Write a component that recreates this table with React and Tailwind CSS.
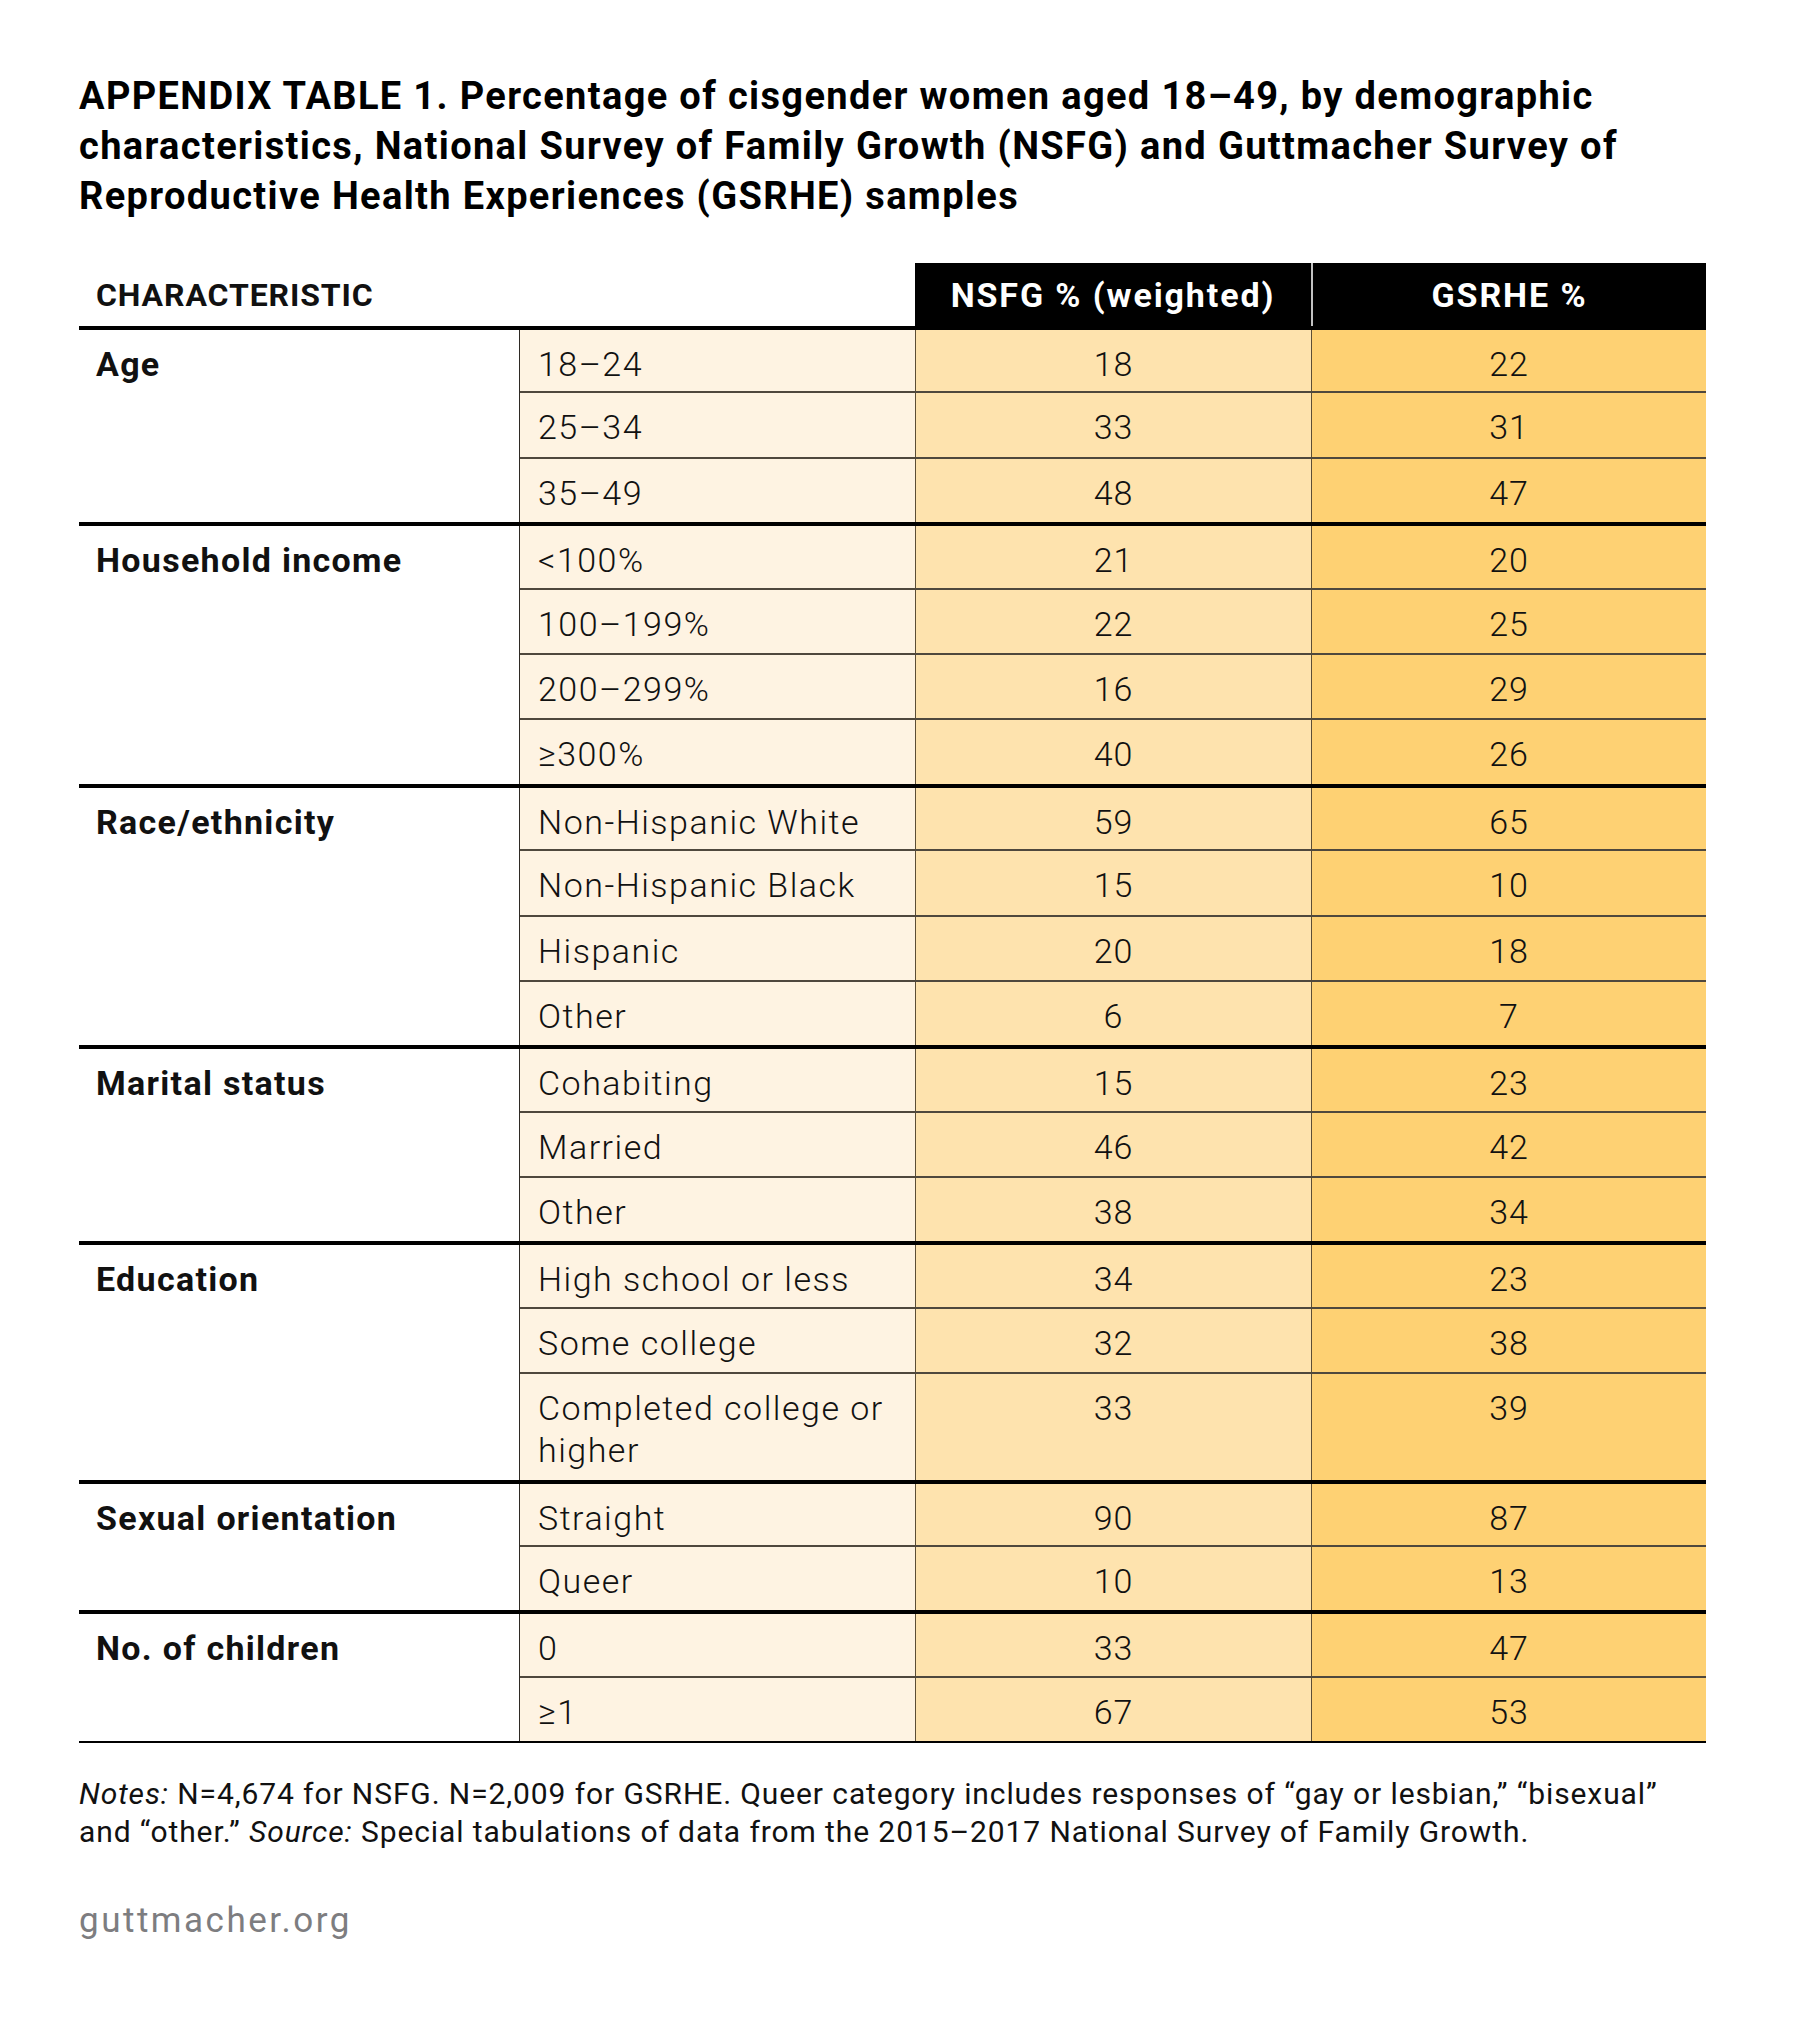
const GROUPS = [
	{
		label: "Age",
		rows: [
			["18–24", "18", "22"],
			["25–34", "33", "31"],
			["35–49", "48", "47"],
		],
	},
	{
		label: "Household income",
		rows: [
			["<100%", "21", "20"],
			["100–199%", "22", "25"],
			["200–299%", "16", "29"],
			["≥300%", "40", "26"],
		],
	},
	{
		label: "Race/ethnicity",
		rows: [
			["Non-Hispanic White", "59", "65"],
			["Non-Hispanic Black", "15", "10"],
			["Hispanic", "20", "18"],
			["Other", "6", "7"],
		],
	},
	{
		label: "Marital status",
		rows: [
			["Cohabiting", "15", "23"],
			["Married", "46", "42"],
			["Other", "38", "34"],
		],
	},
	{
		label: "Education",
		rows: [
			["High school or less", "34", "23"],
			["Some college", "32", "38"],
			[["Completed college or", "higher"], "33", "39"],
		],
	},
	{
		label: "Sexual orientation",
		rows: [
			["Straight", "90", "87"],
			["Queer", "10", "13"],
		],
	},
	{
		label: "No. of children",
		rows: [
			["0", "33", "47"],
			["≥1", "67", "53"],
		],
	},
];

const Row = ({ row, first }) => {
	const [name, nsfg, gsrhe] = row;
	const tall = Array.isArray(name);
	let h = "h-[65.4px] border-t-2 border-[#4f483d]";
	if (first) h = "h-[61.4px]";
	if (tall) h = "h-[107.3px] border-t-2 border-[#4f483d]";

	return (
		<div className={`flex ${h}`}>
			<div className="w-[395px] bg-[#fef3e2] pl-[18px] pt-[13px] tracking-[1.5px]">
				{tall ? (
					<>
						{name[0]}
						<br />
						{name[1]}
					</>
				) : (
					name
				)}
			</div>
			<div className="w-[396px] bg-[#fee3ae] border-l-[1.5px] border-[#5c4e35] text-center pt-[13px] tracking-[1px]">{nsfg}</div>
			<div className="w-[395px] bg-[#fed173] border-l-[1.5px] border-[#5c4e35] text-center pt-[13px] tracking-[1px]">{gsrhe}</div>
		</div>
	);
};

const App = () => {
	return (
		<div className="w-[1800px] h-[2024px] bg-white pl-[79px] pt-[71px] font-['Roboto',sans-serif] text-[#111]">
			<h1 className="text-[38px] leading-[50px] font-bold text-black tracking-[1.35px]">
				APPENDIX TABLE 1. Percentage of cisgender women aged 18–49, by demographic
				<br />
				characteristics, National Survey of Family Growth (NSFG) and Guttmacher Survey of
				<br />
				Reproductive Health Experiences (GSRHE) samples
			</h1>

			<div className="mt-[42px] w-[1627px] text-[34px] leading-[42px]">
				<div className="flex h-[63px] font-bold">
					<div className="w-[836px] pl-[17px] pt-[11px] text-[32px] tracking-[0.9px]">CHARACTERISTIC</div>
					<div className="w-[396px] bg-black text-white text-center pt-[11px] tracking-[1.9px]">NSFG % (weighted)</div>
					<div className="w-[395px] bg-black text-white text-center pt-[11px] tracking-[1.9px] border-l-2 border-[#c2c2c2]">GSRHE %</div>
				</div>

				{GROUPS.map((g) => (
					<div key={g.label} className="flex border-t-4 border-black">
						<div className="w-[441px] pl-[17px] pt-[13px] font-bold tracking-[1.3px]">{g.label}</div>
						<div className="flex flex-col border-l-[1.5px] border-[#2e2a24] font-light">
							{g.rows.map((r, i) => (
								<Row key={i} row={r} first={i === 0} />
							))}
						</div>
					</div>
				))}
				<div className="h-[2px] bg-black" />
			</div>

			<p className="mt-[32px] text-[30px] leading-[38px] tracking-[0.9px]">
				<i>Notes:</i> N=4,674 for NSFG. N=2,009 for GSRHE. Queer category includes responses of “gay or lesbian,” “bisexual”
				<br />
				and “other.” <i>Source:</i> Special tabulations of data from the 2015–2017 National Survey of Family Growth.
			</p>

			<p className="mt-[50px] text-[35px] leading-[40px] text-[#7d7d80] tracking-[2.5px]">guttmacher.org</p>
		</div>
	);
};

export default App;
